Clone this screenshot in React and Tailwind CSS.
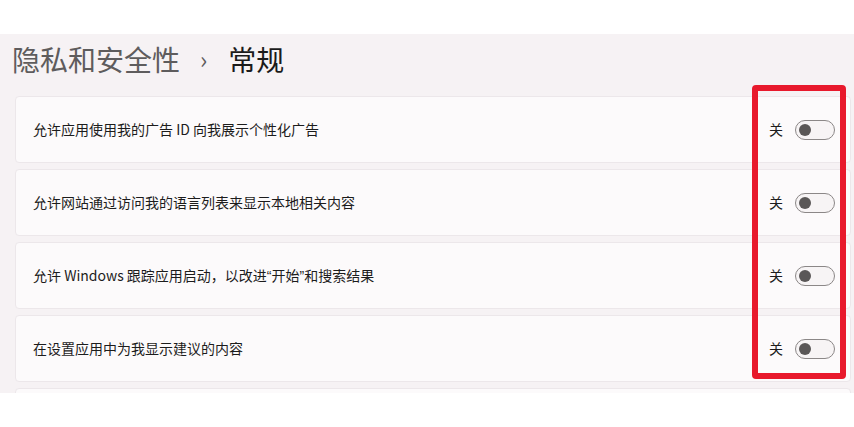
const rows = [
	"允许应用使用我的广告 ID 向我展示个性化广告",
	"允许网站通过访问我的语言列表来显示本地相关内容",
	<>允许 Windows 跟踪应用启动，以改进<span className='font-["Liberation_Sans"]'>“</span>开始<span className='font-["Liberation_Sans"]'>”</span>和搜索结果</>,
	"在设置应用中为我显示建议的内容",
];

function Toggle() {
	return (
		<div className='w-[40px] h-[20px] rounded-full border border-[#8b8787] bg-[#f7f4f5] flex items-center px-[3px]'>
			<div className='w-[12px] h-[12px] rounded-full bg-[#5a5757]' />
		</div>
	);
}

function SettingRow({ label }) {
	return (
		<div className='h-[67px] shrink-0 rounded-[4px] border border-[#ece7ea] bg-[#fcfafb] flex items-center justify-between pl-[17px] pr-[15px]'>
			<span className='text-[14px] text-[#1c1c1c]'>{label}</span>
			<div className='flex items-center gap-[12px]'>
				<span className='text-[14px] text-[#1c1c1c]'>关</span>
				<Toggle />
			</div>
		</div>
	);
}

export default function App() {
	return (
		<div className='relative w-[854px] h-[427px] bg-white overflow-hidden' style={{ fontFamily: '"Noto Sans CJK SC", "Noto Sans", sans-serif' }}>
			<div className='h-[34px]' />
			<div className='h-[359px] bg-[#f6f2f4] overflow-hidden'>
				<h1 className='pt-[6px] pl-[12px] h-[43px] mb-[19px] text-[28px] leading-[36px] flex items-center'>
					<span className='text-[#5e5c5d]'>隐私和安全性</span>
					<span className='text-[#5e5c5d] text-[24px] ml-[20px] mr-[21px]'>›</span>
					<span className='text-[#1b1b1b]'>常规</span>
				</h1>
				<div className='ml-[15px] w-[836px] flex flex-col gap-[6px]'>
					{rows.map((r, i) => (
						<SettingRow key={i} label={r} />
					))}
					<div className='h-[67px] shrink-0 rounded-[4px] border border-[#ece7ea] bg-[#fcfafb]' />
				</div>
			</div>

			{/* red highlight box */}
			<div className='absolute left-[752px] top-[85px] w-[94px] h-[294px] border-[6px] border-[#e8192c] rounded-[4px]' />
		</div>
	);
}
